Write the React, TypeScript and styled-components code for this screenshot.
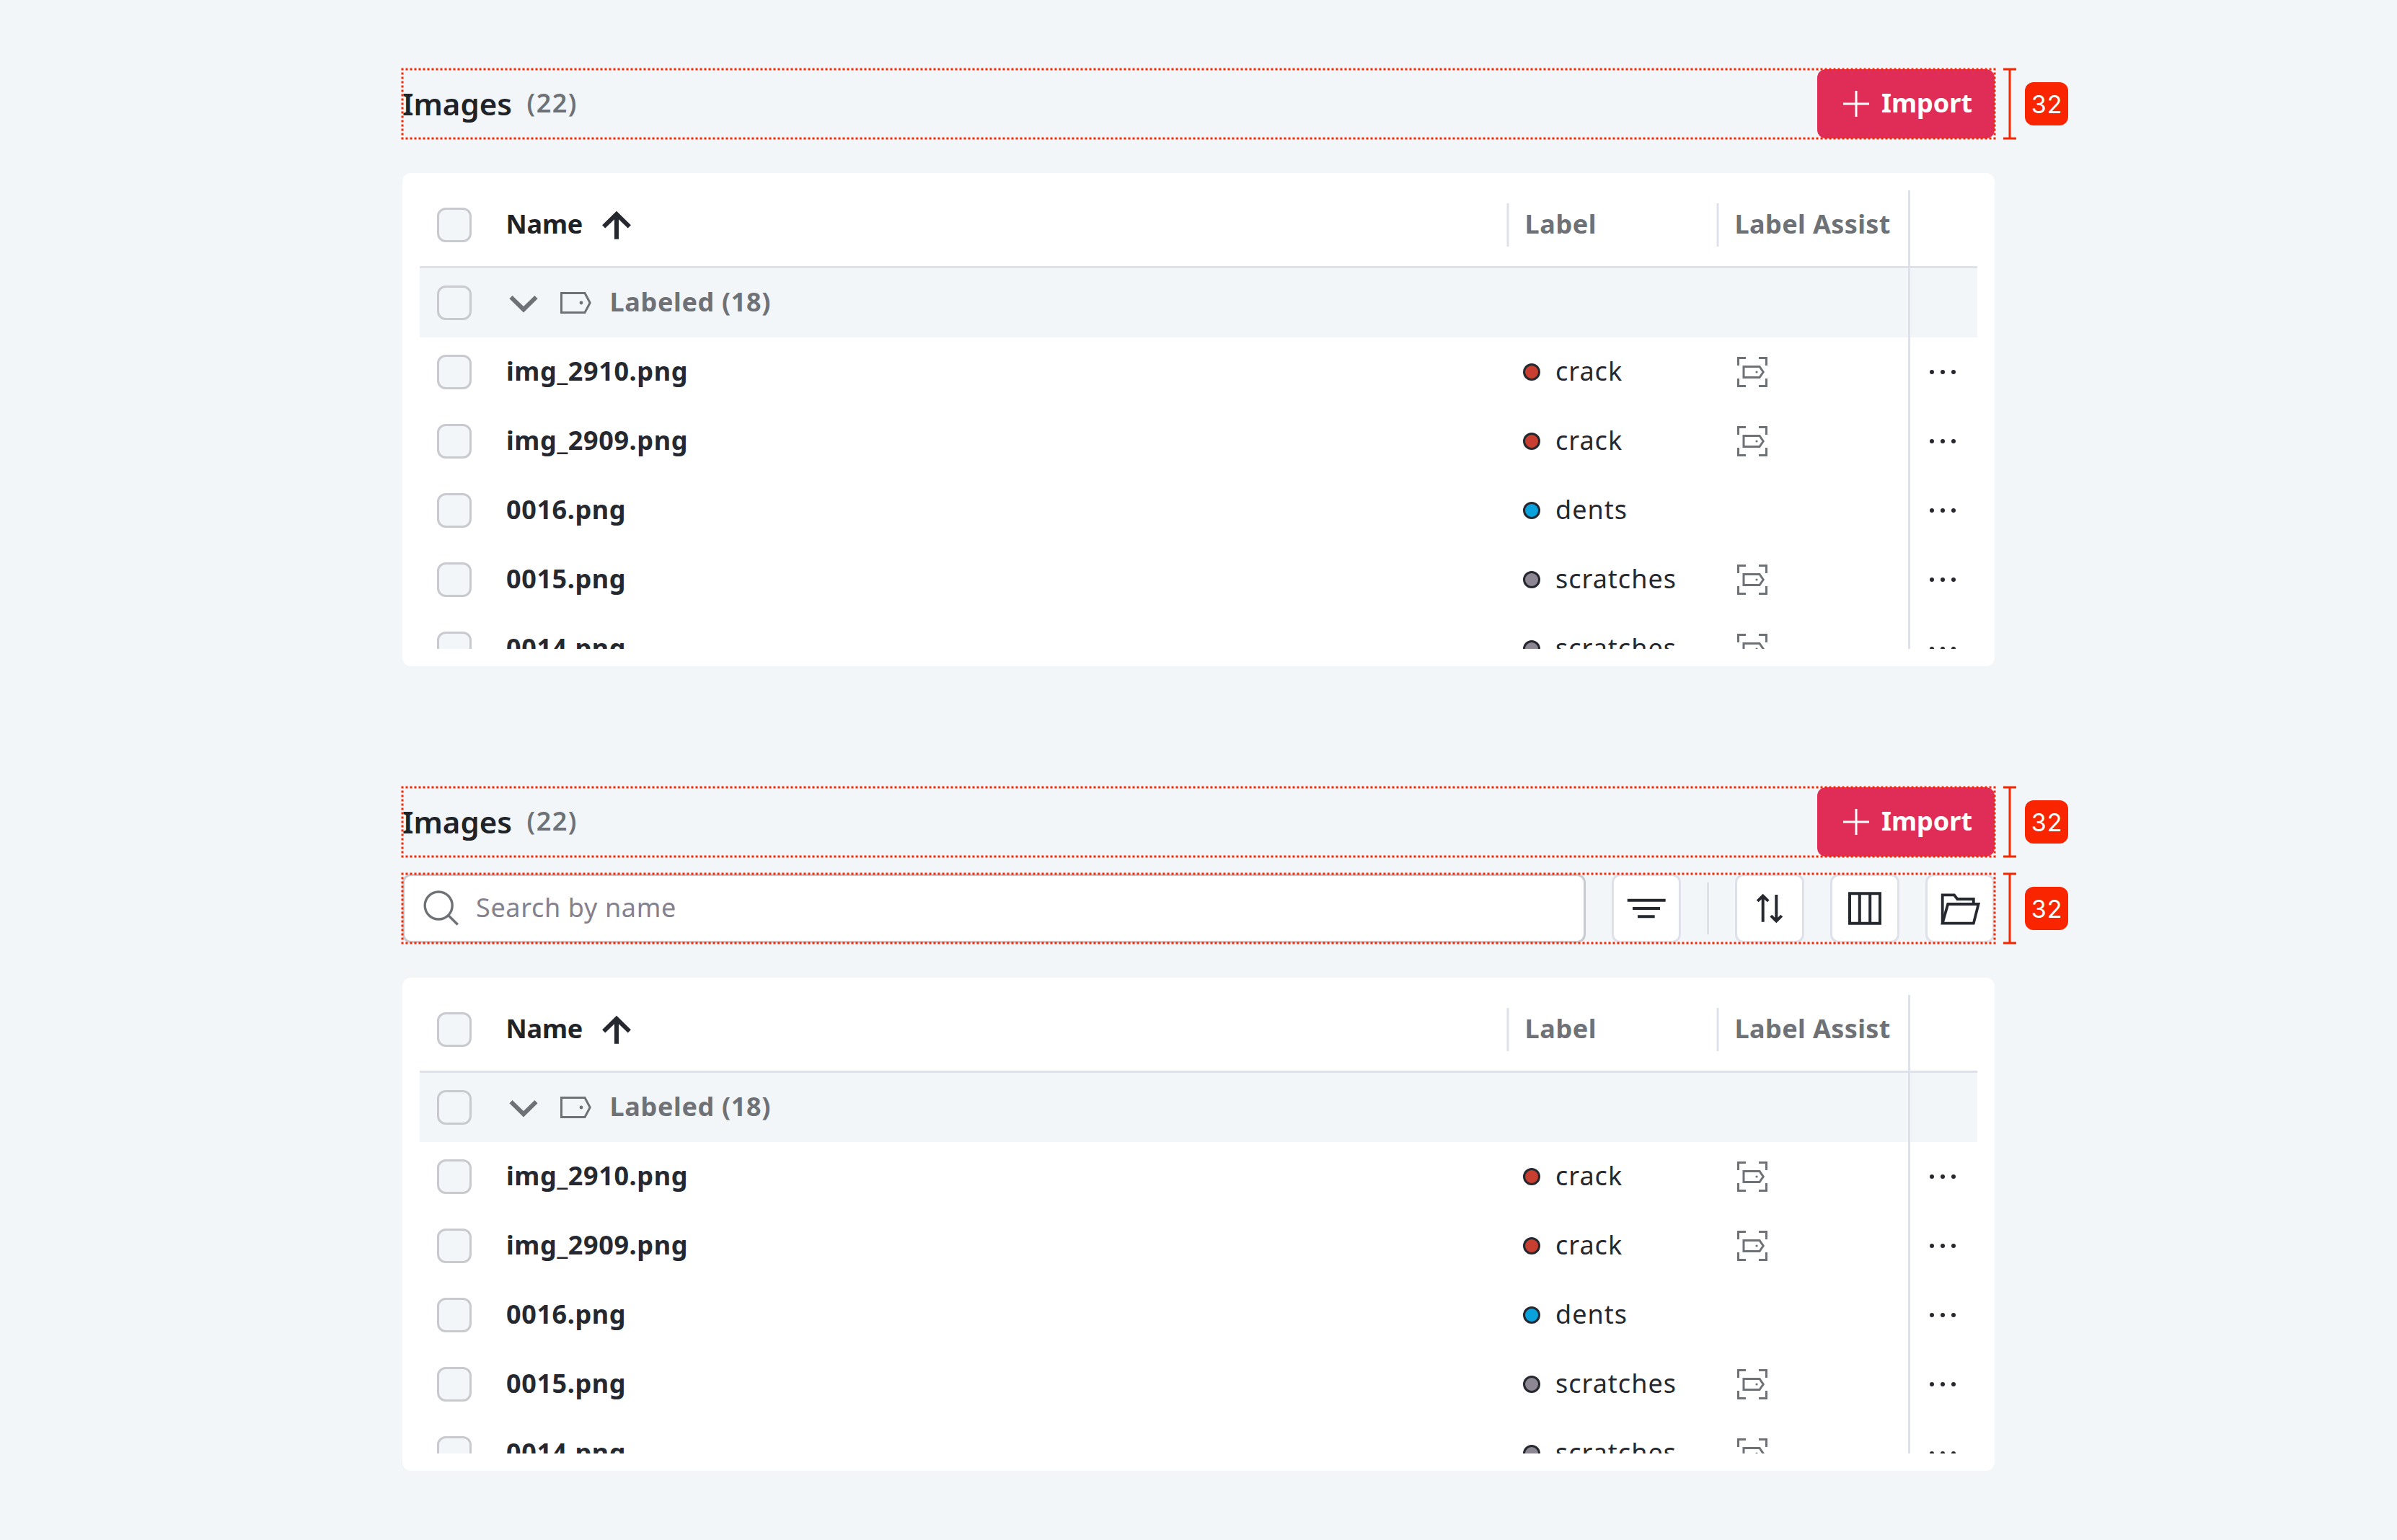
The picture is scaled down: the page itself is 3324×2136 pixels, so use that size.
import type { ReactNode } from "react";
import styled, { createGlobalStyle } from "styled-components";

const colors = {
  page: "#f2f6f9",
  ink: "#26282f",
  heading: "#1f2226",
  muted: "#6e7176",
  placeholder: "#85818c",
  line: "#dfe1ea",
  control: "#c9cacf",
  primary: "#e02d57",
  measure: "#f82500",
};

const GlobalStyle = createGlobalStyle`
  * {
    box-sizing: border-box;
  }
  body {
    margin: 0;
    background: ${colors.page};
    font-family: "Noto Sans", "Open Sans", sans-serif;
  }
  svg {
    display: block;
    flex: none;
    overflow: visible;
  }
`;

const Page = styled.main`
  display: flex;
  flex-direction: column;
  gap: 168px;
  min-height: 2136px;
  padding: 96px 0 96px 558px;
  background: ${colors.page};
`;

const Section = styled.section`
  display: flex;
  flex-direction: column;
`;

const MeasuredRow = styled.div<{ $gapTop?: number }>`
  display: flex;
  align-items: center;
  gap: 12px;
  margin-top: ${(p) => p.$gapTop ?? 0}px;
`;

const Measured = styled.div`
  position: relative;
  width: 2208px;
  height: 96px;
`;

const Dots = styled.svg`
  position: absolute;
  inset: 0;
`;

const Badge = styled.span`
  display: flex;
  align-items: center;
  justify-content: center;
  width: 60px;
  height: 60px;
  border-radius: 12px;
  background: ${colors.measure};
  color: #fff;
  font: 400 34px "Inter", sans-serif;
  letter-spacing: 0.8px;
  text-indent: 1px;
`;

const Header = styled.header`
  display: flex;
  align-items: center;
  height: 96px;
`;

const Title = styled.h1`
  margin: 0;
  padding-bottom: 2px;
  width: 172.5px;
  color: ${colors.heading};
  font-size: 42px;
  font-weight: 600;
  letter-spacing: 0;
`;

const Text = styled.span<{ $color?: string; $weight?: number; $track?: number; $shift?: number }>`
  padding-bottom: 4px;
  margin-left: ${(p) => p.$shift ?? 0}px;
  color: ${(p) => p.$color ?? colors.ink};
  font-size: 36px;
  font-weight: ${(p) => p.$weight ?? 400};
  letter-spacing: ${(p) => p.$track ?? 1}px;
  white-space: pre;
`;

const ImportButton = styled.button`
  display: flex;
  align-items: center;
  gap: 11px;
  width: 246px;
  height: 96px;
  margin-left: auto;
  padding: 0 0 0 30px;
  border: 0;
  border-radius: 12px;
  background: ${colors.primary};
  font-family: inherit;
`;

const Toolbar = styled.div`
  display: flex;
  align-items: center;
  gap: 36px;
  height: 96px;
`;

const SearchBox = styled.div`
  display: flex;
  flex: 1;
  align-items: center;
  gap: 18px;
  height: 96px;
  padding-left: 21px;
  border: 3px solid ${colors.control};
  border-radius: 12px;
  background: #fff;
`;

const ToolButton = styled.button`
  display: flex;
  align-items: center;
  justify-content: center;
  width: 96px;
  height: 96px;
  padding: 0;
  border: 3px solid ${colors.line};
  border-radius: 12px;
  background: #fff;
`;

const ToolDivider = styled.span`
  width: 3px;
  height: 72px;
  background: ${colors.line};
`;

const Card = styled.div`
  width: 2208px;
  height: 684px;
  margin-top: 48px;
  padding: 24px;
  border-radius: 12px;
  background: #fff;
`;

const Table = styled.div`
  height: 636px;
  overflow: hidden;
`;

const Row = styled.div<{ $kind?: "head" | "group" }>`
  display: grid;
  grid-template-columns: 120px 1fr 291px 266px 96px;
  height: ${(p) => (p.$kind === "head" ? 108 : 96)}px;
  border-bottom: ${(p) => (p.$kind === "head" ? `3px solid ${colors.line}` : "0")};
  background: ${(p) => (p.$kind === "group" ? colors.page : "transparent")};
`;

const Cell = styled.div<{ $left?: number; $gap?: number }>`
  display: flex;
  align-items: center;
  gap: ${(p) => p.$gap ?? 0}px;
  height: 96px;
  padding-left: ${(p) => p.$left ?? 0}px;
`;

const MenuCell = styled.div`
  display: flex;
  align-items: center;
  justify-content: center;
  box-shadow: inset 3px 0 ${colors.line};
`;

const Checkbox = styled.span`
  width: 48px;
  height: 48px;
  border: 3px solid ${colors.control};
  border-radius: 12px;
  background: ${colors.page};
`;

// 3px rule that sits half a pixel off the column edge
const ColumnRule = styled.span`
  flex: none;
  width: 4px;
  height: 60px;
  background: linear-gradient(90deg, #eff0f4 1px, ${colors.line} 1px 3px, #eff0f4 3px);
`;

const Swatch = styled.span<{ $fill: string }>`
  width: 24px;
  height: 24px;
  border: 3px solid ${colors.ink};
  border-radius: 50%;
  background: ${(p) => p.$fill};
`;

interface IconProps {
  size?: number;
  color?: string;
  width?: number;
  children: ReactNode;
}

const Icon = ({ size = 48, color = colors.ink, width = 3, children }: IconProps) => (
  <svg width={size} height={size} viewBox={`0 0 ${size} ${size}`} fill="none" stroke={color} strokeWidth={width}>
    {children}
  </svg>
);

const PlusIcon = () => (
  <Icon color="#fff">
    <path d="M24 6V42M6 24H42" />
  </Icon>
);

const ArrowUpIcon = () => (
  <Icon width={6}>
    <path d="M6.2 26.4L24 9L41.8 26.4M24 9V43.7" />
  </Icon>
);

const ChevronIcon = () => (
  <Icon width={6} color={colors.muted}>
    <path d="M6.5 16.1L24 33.2L41.5 16.1" />
  </Icon>
);

const TagIcon = () => (
  <Icon color={colors.muted}>
    <path d="M4.5 10.5H37L44.2 24L37 37.5H4.5Z" />
    <circle cx="32" cy="24" r="2.4" fill={colors.muted} stroke="none" />
  </Icon>
);

const AssistIcon = () => (
  <Icon color={colors.muted}>
    <path d="M15 4.5H4.5V15M33 4.5H43.5V15M15 43.5H4.5V33M33 43.5H43.5V33" />
    <path d="M12 16.5H34L39.2 24L34 31.5H12Z" />
    <circle cx="30" cy="24" r="1.6" fill={colors.muted} stroke="none" />
  </Icon>
);

const MoreIcon = () => (
  <Icon>
    <g fill={colors.ink} stroke="none">
      <circle cx="9" cy="24" r="3" />
      <circle cx="24" cy="24" r="3" />
      <circle cx="39" cy="24" r="3" />
    </g>
  </Icon>
);

const SearchIcon = () => (
  <Icon size={60} color={colors.muted} width={3.4}>
    <circle cx="26.2" cy="26" r="19" />
    <path d="M39.7 39.5L52.8 52.5" />
  </Icon>
);

const FilterIcon = () => (
  <Icon size={60} width={4}>
    <path d="M3.7 18.7H56.7M11 30H49M18 41.2H41.7" />
  </Icon>
);

const SortIcon = () => (
  <Icon size={60} width={4}>
    <path d="M20.7 12.5V48.7M13.2 19.9L20.7 12.5L28.2 19.9" />
    <path d="M39.3 11V47.5M31.8 40.1L39.3 47.5L46.8 40.1" />
  </Icon>
);

const ColumnsIcon = () => (
  <Icon size={60} width={4}>
    <path d="M9 9.3H51V50.7H9ZM22.8 9.3V50.7M37.2 9.3V50.7" />
  </Icon>
);

const FolderIcon = () => (
  <Icon size={60} width={3.8}>
    <path d="M5.7 50.7V11.3H22L26.3 17H48.8V24" />
    <path d="M13.2 24H55.6L48.8 50.7H5.7Z" />
  </Icon>
);

const Measure = ({ gapTop, children }: { gapTop?: number; children: ReactNode }) => (
  <MeasuredRow $gapTop={gapTop}>
    <Measured>
      {children}
      <Dots width="2208" height="96" fill="none" stroke={colors.measure} strokeWidth="3" strokeDasharray="3 3">
        <path d="M-1.5 0H2209.5M-1.5 96H2209.5M0 4.5V91.5M2208 4.5V91.5" />
      </Dots>
    </Measured>
    <svg width="18" height="96" fill="none" stroke={colors.measure} strokeWidth="3">
      <path d="M0 0H18M0 96H18M9 0V96" />
    </svg>
    <Badge>32</Badge>
  </MeasuredRow>
);

const PageHeader = () => (
  <Header>
    <Title>Images</Title>
    <Text $color={colors.muted} $weight={600} $track={1.5}>
      (22)
    </Text>
    <ImportButton>
      <PlusIcon />
      <Text $color="#fff" $weight={700} $track={0}>
        Import
      </Text>
    </ImportButton>
  </Header>
);

const SearchToolbar = () => (
  <Toolbar>
    <SearchBox>
      <SearchIcon />
      <Text $color={colors.placeholder} $track={0.65}>
        Search by name
      </Text>
    </SearchBox>
    <ToolButton>
      <FilterIcon />
    </ToolButton>
    <ToolDivider />
    <ToolButton>
      <SortIcon />
    </ToolButton>
    <ToolButton>
      <ColumnsIcon />
    </ToolButton>
    <ToolButton>
      <FolderIcon />
    </ToolButton>
  </Toolbar>
);

const swatches: Record<string, string> = {
  crack: "#c83f31",
  dents: "#0aa2dc",
  scratches: "#8c8793",
};

const images = [
  { name: "img_2910.png", label: "crack", assist: true },
  { name: "img_2909.png", label: "crack", assist: true },
  { name: "0016.png", label: "dents", assist: false },
  { name: "0015.png", label: "scratches", assist: true },
  { name: "0014.png", label: "scratches", assist: true },
];

const ImageTable = () => (
  <Card>
    <Table>
      <Row $kind="head">
        <Cell $left={24}>
          <Checkbox />
        </Cell>
        <Cell $gap={23}>
          <Text $color={colors.heading} $weight={700} $track={-0.2} $shift={-0.5}>
            Name
          </Text>
          <ArrowUpIcon />
        </Cell>
        <Cell $gap={21}>
          <ColumnRule />
          <Text $color={colors.muted} $weight={700} $track={0.6} $shift={0.5}>
            Label
          </Text>
        </Cell>
        <Cell $gap={21}>
          <ColumnRule />
          <Text $color={colors.muted} $weight={700} $track={0.4} $shift={0.5}>
            Label Assist
          </Text>
        </Cell>
        <MenuCell />
      </Row>
      <Row $kind="group">
        <Cell $left={24}>
          <Checkbox />
        </Cell>
        <Cell $gap={24}>
          <ChevronIcon />
          <TagIcon />
          <Text $color={colors.muted} $weight={700} $track={0.65} $shift={-0.5}>
            Labeled (18)
          </Text>
        </Cell>
        <Cell />
        <Cell />
        <MenuCell />
      </Row>
      {images.map((image) => (
        <Row key={image.name}>
          <Cell $left={24}>
            <Checkbox />
          </Cell>
          <Cell>
            <Text $weight={700} $track={0.6}>
              {image.name}
            </Text>
          </Cell>
          <Cell $left={23} $gap={21}>
            <Swatch $fill={swatches[image.label]} />
            <Text>{image.label}</Text>
          </Cell>
          <Cell $left={26}>{image.assist && <AssistIcon />}</Cell>
          <MenuCell>
            <MoreIcon />
          </MenuCell>
        </Row>
      ))}
    </Table>
  </Card>
);

const App = () => (
  <>
    <GlobalStyle />
    <Page>
      <Section>
        <Measure>
          <PageHeader />
        </Measure>
        <ImageTable />
      </Section>
      <Section>
        <Measure>
          <PageHeader />
        </Measure>
        <Measure gapTop={24}>
          <SearchToolbar />
        </Measure>
        <ImageTable />
      </Section>
    </Page>
  </>
);

export default App;
